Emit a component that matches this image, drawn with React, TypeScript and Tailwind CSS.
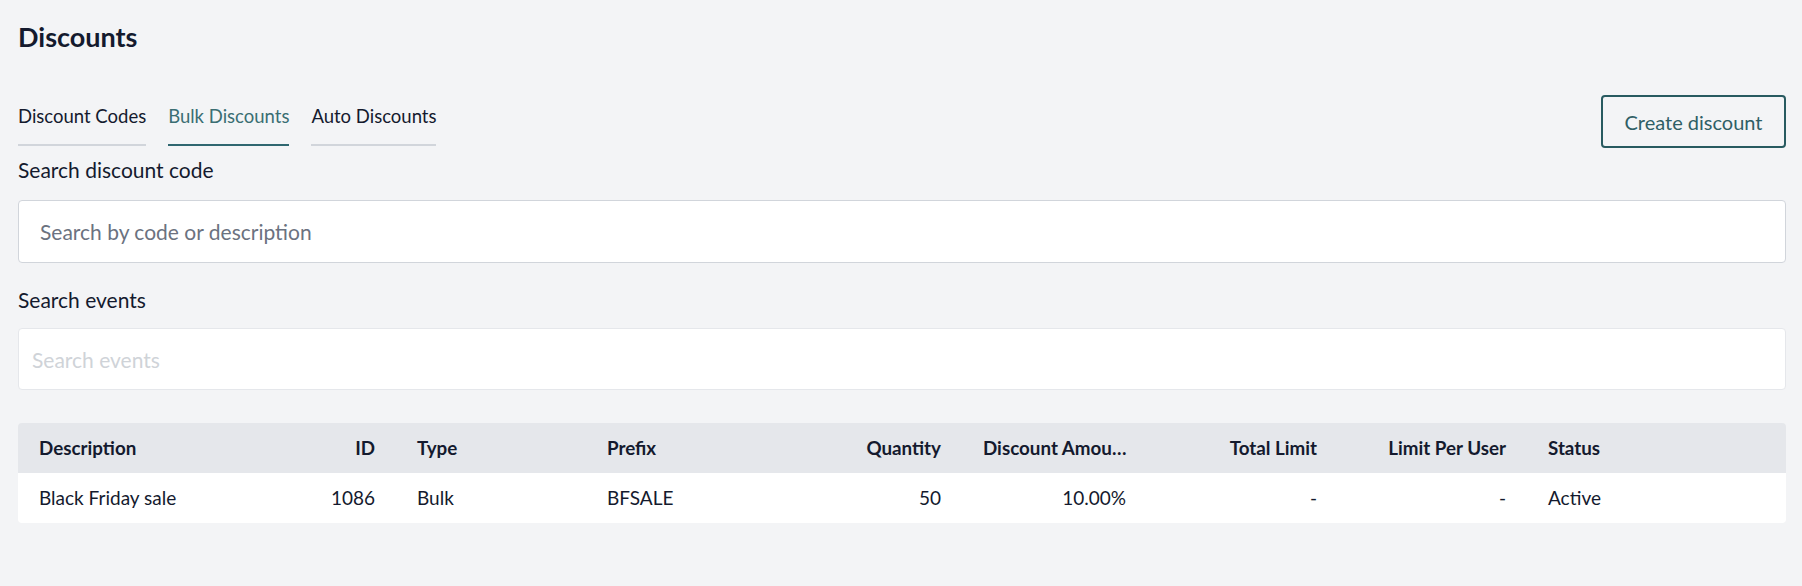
import React from "react";

const tabs = ["Discount Codes", "Bulk Discounts", "Auto Discounts"];

const columns = [
  { label: "Description", align: "left" },
  { label: "ID", align: "right" },
  { label: "Type", align: "left" },
  { label: "Prefix", align: "left" },
  { label: "Quantity", align: "right" },
  { label: "Discount Amount", align: "right" },
  { label: "Total Limit", align: "right" },
  { label: "Limit Per User", align: "right" },
  { label: "Status", align: "left" },
];

const rows = [["Black Friday sale", "1086", "Bulk", "BFSALE", "50", "10.00%", "-", "-", "Active"]];

const gridCols = "grid grid-cols-[278px_100px_190px_190px_186px_185px_191px_189px_1fr]";

function headerClass(label: string, align: string) {
  if (label === "Discount Amount") return "truncate pl-[21px] pr-[18px] text-left text-[18.8px] font-bold";
  if (align === "right") return "truncate px-[21px] text-right text-[18.8px] font-bold";
  return "truncate px-[21px] text-left text-[18.8px] font-bold";
}

export default function App() {
  return (
    <div className="min-h-[586px] bg-[#f3f4f6] pl-[18px] pr-[16px] pt-[22px] font-['Lato','Liberation_Sans',sans-serif] text-[#141a2e]">
      <h1 className="text-[27px] font-bold leading-[30px] text-[#141a2e]">Discounts</h1>

      <div className="mt-[43px] flex items-start justify-between">
        <nav className="mt-[8px] flex gap-[22px]">
          {tabs.map((tab) => {
            const active = tab === "Bulk Discounts";
            return (
              <button
                key={tab}
                className={
                  active
                    ? "border-b-2 border-[#2f6770] pb-[15px] text-[18.5px] leading-[26px] text-[#3a6e73]"
                    : "border-b-2 border-[#d1d5db] pb-[15px] text-[18.5px] leading-[26px] text-[#141a2e]"
                }
              >
                {tab}
              </button>
            );
          })}
        </nav>
        <button className="h-[53px] w-[185px] rounded-[4px] border-2 border-[#285a60] text-[20px] text-[#2f5f66]">
          Create discount
        </button>
      </div>

      <label className="mt-[9px] block text-[21px] leading-[26px]">Search discount code</label>
      <input
        className="mt-[17px] block h-[63px] w-full rounded-[4px] border border-[#d1d5db] bg-white px-[21px] text-[21px] outline-none placeholder:text-[#6b7280]"
        placeholder="Search by code or description"
      />

      <label className="mt-[24px] block text-[21px] leading-[26px]">Search events</label>
      <input
        className="mt-[15px] block h-[62px] w-full rounded-[4px] border border-[#e5e7eb] bg-white px-[13px] text-[21px] outline-none placeholder:text-[#cfd3d8]"
        placeholder="Search events"
      />

      <div className="mt-[33px] overflow-hidden rounded-[4px]">
        <div className={`${gridCols} h-[50px] items-center bg-[#e5e7eb]`}>
          {columns.map((col) => (
            <div key={col.label} className={headerClass(col.label, col.align)}>
              {col.label}
            </div>
          ))}
        </div>
        {rows.map((row) => (
          <div key={row[1]} className={`${gridCols} h-[50px] items-center bg-white`}>
            {row.map((cell, i) => (
              <div
                key={i}
                className={
                  columns[i].align === "right"
                    ? "truncate px-[21px] text-right text-[19px]"
                    : "truncate px-[21px] text-left text-[19px]"
                }
              >
                {cell}
              </div>
            ))}
          </div>
        ))}
      </div>
    </div>
  );
}
